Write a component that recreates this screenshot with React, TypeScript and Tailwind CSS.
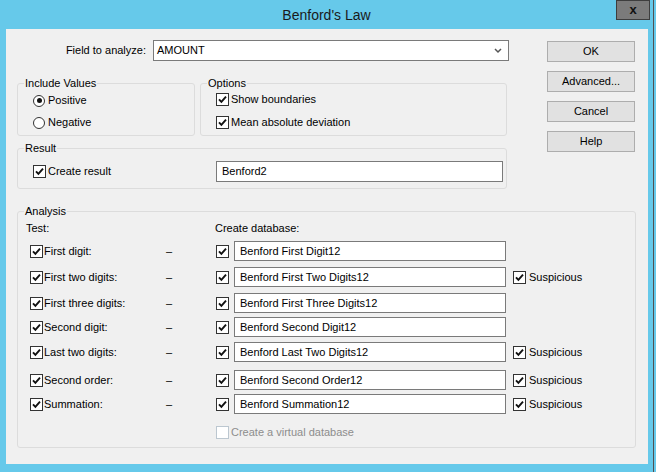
import React from "react";

type Row = {
  test: string;
  db: string;
  suspicious: boolean;
  gap: string;
};

const rows: Row[] = [
  { test: "First digit:", db: "Benford First Digit12", suspicious: false, gap: "mt-[6px]" },
  { test: "First two digits:", db: "Benford First Two Digits12", suspicious: true, gap: "mt-[6px]" },
  { test: "First three digits:", db: "Benford First Three Digits12", suspicious: false, gap: "mt-[6px]" },
  { test: "Second digit:", db: "Benford Second Digit12", suspicious: false, gap: "mt-[4px]" },
  { test: "Last two digits:", db: "Benford Last Two Digits12", suspicious: true, gap: "mt-[5px]" },
  { test: "Second order:", db: "Benford Second Order12", suspicious: true, gap: "mt-[8px]" },
  { test: "Summation:", db: "Benford Summation12", suspicious: true, gap: "mt-[4px]" },
];

function Check({ checked = true, disabled = false }: { checked?: boolean; disabled?: boolean }) {
  return (
    <span
      className={`flex h-[13px] w-[13px] shrink-0 items-center justify-center border bg-white ${
        disabled ? "border-[#bcc7d0]" : "border-[#333333]"
      }`}
    >
      {checked && (
        <svg width="9" height="9" viewBox="0 0 9 9">
          <path d="M1 4.3 L3.4 6.8 L8 1.6" fill="none" stroke="#111" strokeWidth="1.9" />
        </svg>
      )}
    </span>
  );
}

function Radio({ checked }: { checked: boolean }) {
  return (
    <span className="flex h-[12px] w-[12px] shrink-0 items-center justify-center rounded-full border border-[#333333] bg-white">
      {checked && <span className="h-[5px] w-[5px] rounded-full bg-[#111]" />}
    </span>
  );
}

function Group({
  label,
  className,
  children,
}: {
  label: string;
  className: string;
  children: React.ReactNode;
}) {
  return (
    <fieldset className={`m-0 min-w-0 rounded-[3px] border border-[#dcdcdc] p-0 ${className}`}>
      <legend className="ml-[6px] px-px leading-[13px]">{label}</legend>
      {children}
    </fieldset>
  );
}

function TextBox({ value, className }: { value: string; className: string }) {
  return (
    <div className={`flex items-center border border-[#7a7a7a] bg-white pl-[5px] ${className}`}>
      {value}
    </div>
  );
}

function Button({ label }: { label: string }) {
  return (
    <div className="flex h-[21px] w-[88px] items-center justify-center border border-[#adadad] bg-[#e1e1e1]">
      {label}
    </div>
  );
}

export default function App() {
  return (
    <div className="flex h-[472px] w-[656px] bg-[#66c9ea] font-['Liberation_Sans',Arial,sans-serif] text-[11px] leading-[13px] text-[#000]">
      <div className="flex w-[653px] flex-col">
        {/* Title bar */}
        <div className="relative flex h-[29px] items-center justify-center">
          <span className="text-[14px] leading-[16px] text-[#1a1a1a]">Benford's Law</span>
          <div className="absolute right-[3px] top-0 flex h-[20px] w-[34px] items-center justify-center border border-[#3d3d3d] bg-[#7b7b7b] pb-[2px] text-[13px] font-bold text-[#111]">
            x
          </div>
        </div>

        {/* Client area */}
        <div className="ml-[6px] flex h-[435px] w-[642px] flex-col bg-[#f0f0f0] pl-[11px] pt-[11px]">
          <div className="flex">
            <div className="flex w-[492px] flex-col">
              {/* Field row */}
              <div className="flex items-center">
                <span className="w-[136px] pr-[7px] text-right">Field to analyze:</span>
                <div className="flex h-[21px] w-[356px] items-center justify-between border border-[#7a7a7a] bg-white pl-[3px] pr-[6px]">
                  <span>AMOUNT</span>
                  <svg width="8" height="6" viewBox="0 0 8 6">
                    <path d="M1 1 L4 4 L7 1" fill="none" stroke="#555" strokeWidth="1.5" />
                  </svg>
                </div>
              </div>

              <div className="mt-[16px] flex gap-[5px]">
                <Group label="Include Values" className="h-[59px] w-[178px]">
                  <div className="flex flex-col gap-[9px] pl-[15px] pt-[4px]">
                    <div className="flex h-[13px] items-center gap-[3px]">
                      <Radio checked />
                      <span>Positive</span>
                    </div>
                    <div className="flex h-[13px] items-center gap-[3px]">
                      <Radio checked={false} />
                      <span>Negative</span>
                    </div>
                  </div>
                </Group>
                <Group label="Options" className="h-[59px] w-[307px]">
                  <div className="flex flex-col gap-[10px] pl-[15px] pt-[3px]">
                    <div className="flex h-[13px] items-center gap-[2px]">
                      <Check />
                      <span>Show boundaries</span>
                    </div>
                    <div className="flex h-[13px] items-center gap-[2px]">
                      <Check />
                      <span>Mean absolute deviation</span>
                    </div>
                  </div>
                </Group>
              </div>

              <Group label="Result" className="mt-[6px] h-[47px] w-[490px]">
                <div className="flex items-center pl-[15px] pt-[6px]">
                  <div className="flex w-[183px] items-center gap-[2px]">
                    <Check />
                    <span>Create result</span>
                  </div>
                  <TextBox value="Benford2" className="h-[21px] w-[287px]" />
                </div>
              </Group>
            </div>

            {/* Buttons */}
            <div className="ml-[38px] mt-px flex flex-col gap-[9px]">
              <Button label="OK" />
              <Button label="Advanced..." />
              <Button label="Cancel" />
              <Button label="Help" />
            </div>
          </div>

          {/* Analysis */}
          <Group label="Analysis" className="mt-[16px] h-[243px] w-[619px]">
            <div className="flex flex-col pt-[4px]">
              <div className="flex pl-[8px]">
                <span className="w-[189px]">Test:</span>
                <span>Create database:</span>
              </div>
              {rows.map((r) => (
                <div key={r.test} className={`flex h-[20px] items-center pl-[12px] ${r.gap}`}>
                  <div className="flex w-[136px] items-center gap-px">
                    <Check />
                    <span>{r.test}</span>
                  </div>
                  <span className="w-[50px]">–</span>
                  <Check />
                  <TextBox value={r.db} className="ml-[5px] h-[20px] w-[272px]" />
                  {r.suspicious && (
                    <div className="ml-[7px] flex items-center gap-[3px]">
                      <Check />
                      <span>Suspicious</span>
                    </div>
                  )}
                </div>
              ))}
              <div className="mt-[12px] flex h-[13px] items-center gap-[2px] pl-[198px] text-[#8d8d8d]">
                <Check checked={false} disabled />
                <span>Create a virtual database</span>
              </div>
            </div>
          </Group>
        </div>
      </div>
      <div className="w-px bg-[#505050]" />
    </div>
  );
}
